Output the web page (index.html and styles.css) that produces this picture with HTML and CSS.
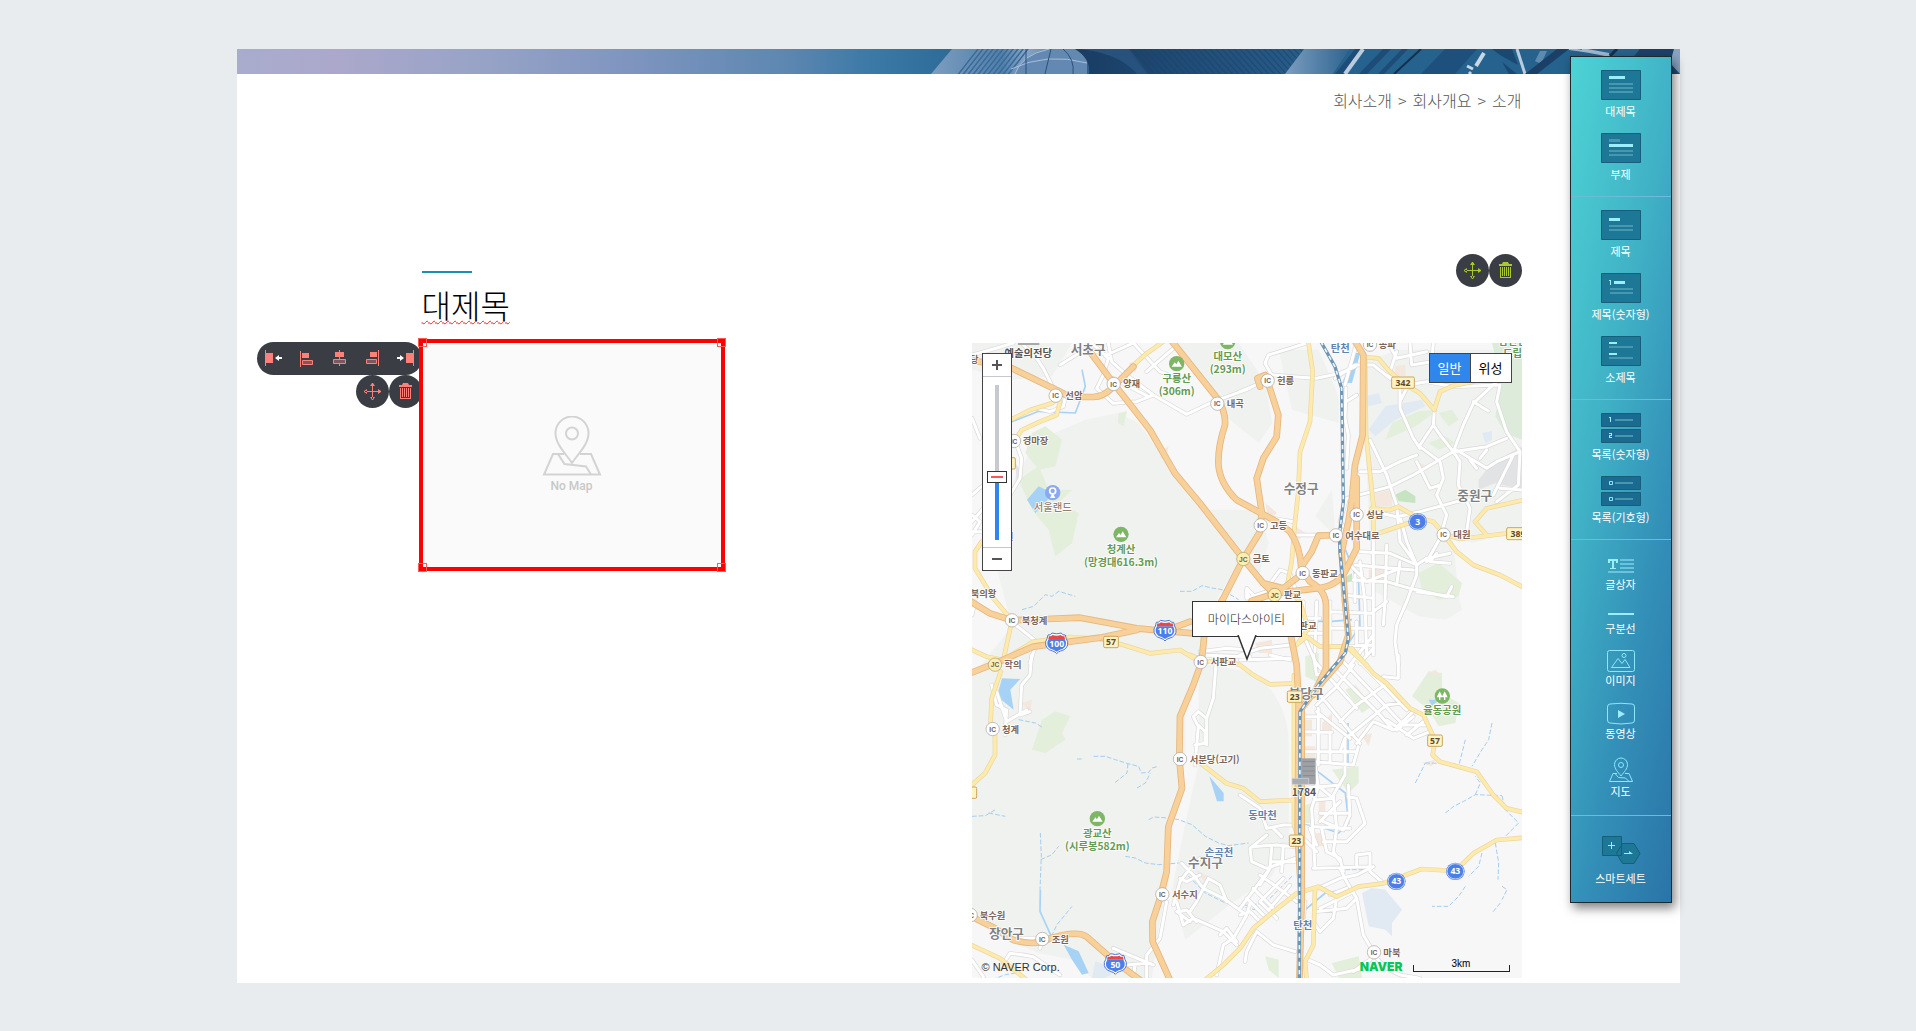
FILE: index.html
```html
<!DOCTYPE html>
<html lang="ko">
<head>
    <meta charset="UTF-8">
    <meta name="viewport" content="width=device-width, initial-scale=1.0">
    <title>회사소개 - 소개</title>
    <link rel="stylesheet" href="styles.css">
</head>
<body>
<div class="page">
    <!-- 상단 배너 -->
    <svg class="banner" viewBox="0 0 1443 25" preserveAspectRatio="none" aria-hidden="true">
        <defs>
            <linearGradient id="sky" x1="0" x2="1">
                <stop offset="0" stop-color="#a9accd"/>
                <stop offset=".07" stop-color="#aba8cb"/>
                <stop offset=".17" stop-color="#97a3c6"/>
                <stop offset=".27" stop-color="#7f95c0"/>
                <stop offset=".38" stop-color="#5d87b1"/>
                <stop offset=".44" stop-color="#3b79a6"/>
                <stop offset=".49" stop-color="#2e6c9a"/>
                <stop offset=".62" stop-color="#245a88"/>
                <stop offset="1" stop-color="#1f4d79"/>
            </linearGradient>
            <linearGradient id="tower" x1="0" x2="1">
                <stop offset="0" stop-color="#7d9dc0"/>
                <stop offset=".45" stop-color="#4f7fab"/>
                <stop offset=".6" stop-color="#87a5c6"/>
                <stop offset="1" stop-color="#2d608e"/>
            </linearGradient>
            <linearGradient id="facade" x1="0" x2="1">
                <stop offset="0" stop-color="#7c9dbf"/>
                <stop offset="1" stop-color="#2d6491"/>
            </linearGradient>
            <linearGradient id="shade" x1="0" x2="1">
                <stop offset="0" stop-color="#193c63"/>
                <stop offset="1" stop-color="#265d8a"/>
            </linearGradient>
            <pattern id="slats" width="5" height="25" patternUnits="userSpaceOnUse" patternTransform="skewX(-38)">
                <path d="M1 0V25" stroke="#3a6b99" stroke-width="2"/>
            </pattern>
            <pattern id="lines" width="6" height="25" patternUnits="userSpaceOnUse" patternTransform="skewX(42)">
                <path d="M1 0V25" stroke="#1b4069" stroke-width="1"/>
            </pattern>
        </defs>
        <path fill="url(#sky)" d="M0 0H1443V25H0z"/>
        <path fill="url(#tower)" d="M715 0H852V25H694z"/>
        <path fill="url(#slats)" d="M740 0H792L774 25H720z"/>
        <path d="M778 25Q784 6 812 0H850V25z" fill="#6389b3"/>
        <path d="M778 25Q784 6 812 0M774 20Q810 3 850 14" fill="none" stroke="#a9bfd8"/>
        <path d="M789 0V25M814 0L808 25M826 0Q838 10 836 25" fill="none" stroke="#2a4f7b"/>
        <path d="M838 0H1067L1048 25H852Q854 10 838 0z" fill="url(#shade)"/>
        <path d="M838 0Q880 2 900 25H912L892 0z" fill="#28527e"/>
        <path d="M890 0H1067L1048 25H910z" fill="url(#lines)"/>
        <path d="M1067 0H1113L1096 25H1048z" fill="url(#facade)"/>
        <path d="M1113 0H1403L1380 25H1096z" fill="#25628d"/>
        <path d="M1118 0h6l-18 25h-8zM1146 0h8l-24 25h-8zM1165 0h6l-24 25h-6z" fill="#1c4c77"/>
        <path d="M1126 0L1108 25" stroke="#b9cce0" stroke-width="4"/>
        <path d="M1184 0L1157 25" stroke="#12304f" stroke-width="2"/>
        <path d="M1208 0h32l-22 25h-34z" fill="#1d507d"/>
        <path d="M1247 4L1239 17" stroke="#c8d7e6" stroke-width="4"/>
        <path d="M1230 17L1236 20M1234 23L1232 25" stroke="#c8d7e6" stroke-width="3"/>
        <path d="M1265 13L1280 25H1272zM1255 0h20l6 16-18-10z" fill="#194872"/>
        <path d="M1280 0L1288 25" stroke="#b9cce0" stroke-width="3"/>
        <path d="M1303 2h7l-6 13-6-3z" fill="#5c8bb0"/>
        <path d="M1320 0h12l-32 25h-12zM1403 0h34l-8 25h-44z" fill="#1b4068"/>
        <path d="M1332 0Q1350 2 1373 7M1345 0L1372 5" stroke="#9fb8d0" stroke-width="2" fill="none"/>
        <path d="M1380 0L1373 7" stroke="#12304f" stroke-width="3"/>
        <path d="M1437 0H1443V25L1433 14z" fill="#8aa4c0"/>
    </svg>

    <div class="content">
    <nav class="breadcrumb" aria-label="현재 위치">
        <a href="#">회사소개</a><span>&gt;</span><a href="#">회사개요</a><span>&gt;</span><a href="#">소개</a>
    </nav>

    <section class="section">
        <header class="section-head">
            <h1>대제목</h1>
            <div class="section-tools">
                <button type="button" class="round-btn" aria-label="이동"><svg class="icon" viewBox="0 0 17 17"><use href="#icon-move"/></svg></button>
                <button type="button" class="round-btn" aria-label="삭제"><svg class="icon" viewBox="0 0 17 17"><use href="#icon-trash"/></svg></button>
            </div>
        </header>

        <div class="columns">
            <!-- 선택된 지도 블록 -->
            <div class="empty-map">
                <div class="block-tools">
                    <div class="align-bar">
                        <button type="button" aria-label="왼쪽으로 붙이기"><svg class="icon" viewBox="0 0 17 17"><path d="M0 0h1v16H0zM1 3h7v10H1z"/><path class="arrow" d="M10 8l4-3v2h3v2h-3v2z"/></svg></button>
                        <button type="button" aria-label="왼쪽 정렬"><svg class="icon" viewBox="0 0 17 17"><path d="M2 1h1v16H2zM4 3h7v5H4z"/><path class="hollow" d="M4.500 10.500h10v4h-10z"/></svg></button>
                        <button type="button" aria-label="가운데 정렬"><svg class="icon" viewBox="0 0 17 17"><path d="M8 0h1v16H8zM4 2h9v5H4z"/><path class="hollow" d="M2.500 9.500h12v4h-12z"/></svg></button>
                        <button type="button" aria-label="오른쪽 정렬"><svg class="icon" viewBox="0 0 17 17"><path d="M14 0h1v16h-1zM6 2h7v5H6z"/><path class="hollow" d="M2.500 9.500h10v4h-10z"/></svg></button>
                        <button type="button" aria-label="오른쪽으로 붙이기"><svg class="icon" viewBox="0 0 17 17"><path d="M16 0h1v16h-1zM9 3h7v10H9z"/><path class="arrow" d="M7 8L3 5v2H0v2h3v2z"/></svg></button>
                    </div>
                    <div class="round-row">
                        <button type="button" class="round-btn" aria-label="이동"><svg class="icon" viewBox="0 0 17 17"><use href="#icon-move"/></svg></button>
                        <button type="button" class="round-btn" aria-label="삭제"><svg class="icon" viewBox="0 0 17 17"><use href="#icon-trash"/></svg></button>
                    </div>
                </div>
                <div class="empty-frame">
                    <svg class="no-map-icon" viewBox="0 0 60 60" fill="none" aria-hidden="true">
                        <path d="M30 47C25 39 13.500 29 13.500 17a16.500 16.500 0 0 1 33 0C46.500 29 35 39 30 47z"/>
                        <circle cx="30" cy="17.500" r="6"/>
                        <path d="M22 38H11L2 58.500H58L49 38H38M16 38l6.500 10L44 50.500l5 8"/>
                    </svg>
                    <span>No Map</span>
                </div>
                <i class="handle top left"></i><i class="handle top right"></i>
                <i class="handle bottom left"></i><i class="handle bottom right"></i>
            </div>

            <div class="map">
                <svg class="map-canvas" viewBox="0 0 1650 1905" role="img" aria-label="분당 주변 지도">
                    <defs>
                        <g id="ic"><circle r="20" fill="#fff" stroke="#a8a09a" stroke-width="2"/><text class="ic-text" y="8">IC</text></g>
                        <g id="jc"><circle r="20" fill="#fbeeb0" stroke="#b09a65" stroke-width="2"/><text class="ic-text" y="8">JC</text></g>
                        <g id="peak"><circle r="23" fill="#7db665"/><path d="M-15 9L-6 -4L-1 2L5 -9L16 9z" fill="#fff"/></g>
                        <g id="shield">
                            <path d="M-26 -24Q-18 -22 -14 -30Q0 -25 14 -30Q18 -22 26 -24Q28 -12 33 -4Q36 18 12 24Q4 26 0 32Q-4 26 -12 24Q-36 18 -33 -4Q-28 -12 -26 -24z" fill="#fff" stroke="#5277cf" stroke-width="3"/>
                            <path d="M-24 -12H24L28 -3Q30 16 10 20L0 26L-10 20Q-30 16 -28 -3z" fill="#4c7fe8"/>
                            <path d="M-23 -21Q-16 -19 -13 -24Q0 -20 13 -24Q16 -19 23 -21L25 -12H-25z" fill="#e34a4a"/>
                        </g>
                        <g id="disc"><ellipse rx="28" ry="26" fill="#4d7ee8"/><ellipse rx="25" ry="23" fill="none" stroke="#fff" stroke-width="2"/></g>

                        <g id="minor">
                            <g transform="translate(-36 -24)">
                                <path d="M36 60L90 45L160 24M185 24L230 70L250 100L290 180M300 90L380 40L440 60L520 24L600 110L640 125M395 24L445 70L430 120L410 160L460 205L530 200L580 180M445 24L455 80L500 120L580 180L680 238L760 200L870 160M640 40L560 110M460 130L560 182M36 250L60 310M230 220L270 230L310 215L315 190M170 330L185 370L180 430L150 480M36 480L70 450M36 560L70 520M36 590L68 590M36 600L60 560L36 540M150 860L180 880L230 920L210 985M36 840L45 800M720 950L800 940L870 945M720 960L870 965M870 790L860 770"/>
                            </g>
                            <g transform="translate(804 -24)">
                                <path d="M95 120L75 85L85 60L150 40L200 24M100 120L160 125L230 130L300 115L345 95M0 170L60 145L90 135M285 130L345 90L400 90L450 130M315 150L350 24M318 160L315 250L325 300L320 400M318 200L350 180M445 24L470 70L560 50M450 110L470 50M510 24L515 90L575 80M575 80L580 24M480 150L480 220L520 310L540 340M440 120L500 160L480 200M583 225L580 270L540 330M640 350L600 300L580 270M500 150L560 140L640 155L780 150M780 150L770 200L800 290L840 350M700 200L745 228M770 140L700 205L670 270L640 350L740 335L800 310M640 350L520 420L450 455L320 490M540 335L600 380L610 430L590 480L620 540L600 610L560 680M360 410L420 410L480 380L530 360M390 315L440 420L470 510L480 620L530 690M640 350L660 380L655 450L690 520L680 590M530 380L570 460L600 450M650 345L740 400L770 380L840 350M690 375L710 400M720 370L740 345M840 350L835 450L770 500M780 460L846 465M820 360L800 400L760 480M400 530L470 545L540 530L650 500L720 490M480 545L500 620L530 690L560 670L630 655M590 655L570 680L630 685M330 600L300 560L320 490M160 560L100 550M170 600L280 600M40 780L20 760L20 790L80 770M95 740L120 705L150 715L165 760"/>
                                <path d="M360 650L450 655L530 690L530 720L500 800L470 870L465 920L475 990M345 690L520 705M340 735L440 740L510 760L620 785L635 755M400 600L400 960M440 630L435 800L430 870M330 690L380 740L480 700M310 780L400 790M480 680L470 750M360 680L375 800L380 960M190 800L190 900L230 990M230 800L225 950M190 850L240 850M190 895L250 895M270 800L270 930M270 880L400 880M270 830L400 835M400 830L440 800M280 935L400 930M330 990L400 900M360 985L400 940M350 930L350 860M530 770L640 785M345 720L345 800M0 960L60 940L150 930M0 975L150 970"/>
                            </g>
                            <g transform="translate(-36 936)">
                                <path d="M215 0L210 60L185 90L180 180L210 170M95 90L110 150L140 165L135 240M110 110L140 200L200 165M770 0L760 130L740 190L740 270M740 190L715 170L700 185L715 215L705 330M705 270L735 265L735 230L715 210M665 625L700 660L730 700L790 730L860 780M640 750L660 680L690 640L720 610M660 670L680 680L720 660M690 770L710 740L745 670L780 690L800 740M650 740L670 810L700 790L790 830L830 870M655 770L680 765L710 800M690 800L650 770M860 780L820 850L790 870L770 960M860 780L870 745M780 840L800 820L830 860M620 740L600 850L560 900L560 970M440 900L500 930L560 925M460 880L580 930M520 970L525 930M190 900L220 905L300 960M240 880L245 850L180 850M130 925L150 895L190 900M36 915L70 965"/>
                            </g>
                            <g transform="translate(804 936)">
                                <path d="M220 0L230 60L290 40M90 0L150 15M225 20L350 160M280 40L420 180L460 225M310 20L490 210L560 210M350 10L500 165M230 150L290 95L340 30M240 120L360 265M230 170L330 250M300 200L350 150L420 100L440 85M330 240L440 150L480 145M350 265L400 200L460 225L520 170M440 195L520 250L570 230M470 225L520 185M500 240L550 200M475 0L475 70L430 65M190 185L240 185M190 230L275 232M195 290L350 290M225 320L340 330L355 275M235 160L235 330M270 230L270 320M300 290L315 250L315 360L280 420L290 520M190 400L300 390M225 330L235 395L215 460L225 640M220 380L280 430L225 435M240 475L330 475M225 515L330 520M240 500L300 440M325 390L330 480L310 525L250 500M325 425L350 430L375 505L320 560L250 560M230 570L210 520M190 550L230 590M245 520L260 590L300 610L310 650M220 640L400 635M290 520L280 590L300 620M350 635L350 600L390 595L390 650L425 680M0 420L60 460L80 520L130 510L165 510M80 540L30 580L35 620L80 640L165 610M35 575L110 570L165 575M95 580L90 640L60 690M130 570L125 650M95 620L165 620M125 545L100 520M60 660L130 710L170 740M40 700L100 760M20 730L70 780M0 760L60 680L90 640M60 740L130 670M90 760L150 690M110 790L60 740M0 780L30 770L60 800M50 830L100 870L165 890M50 830L20 890L15 920M235 700L300 670L350 660L400 635M300 640L320 680L350 730L370 840L400 890M225 770L320 760L350 730M290 730L280 790L240 830L220 800M270 720L320 700M195 740L190 800L220 800M205 915L240 930L280 960L370 940L400 900L440 940L480 960L540 970M380 920L340 950M240 760L340 710"/>
                            </g>
                        </g>

                        <g id="local">
                            <g transform="translate(-36 -24)">
                                <path d="M150 255L210 225L275 205L300 185M165 315L185 285L240 260L290 240L300 200M515 95L560 55L610 20M65 620L45 650L45 700L100 790L156 856L130 975M30 942L80 965L130 975L220 920L330 906L420 912L490 930L570 955L660 945L722 982"/>
                            </g>
                            <g transform="translate(804 -24)">
                                <path d="M205 20L218 110L210 260L180 350L175 470L165 560L155 680L140 760L180 800L205 880L170 930M175 925L200 905L240 935L320 935L380 990M375 66L415 70L445 105L490 145L540 175L583 225L600 170L640 152L700 140M375 66L378 300L400 510L400 600M395 520L450 525L475 515L533 548L580 560L612 598L660 612L760 600L850 590M400 600L533 555M612 600L650 650L700 690L780 720L850 757M740 600L705 560L740 520L850 495"/>
                            </g>
                            <g transform="translate(-36 936)">
                                <path d="M122 50L95 130L92 200L105 240L105 300L75 355L30 395M690 0L740 20L800 18L840 30L880 60L930 88L1005 85M722 325L800 385L850 400L900 440L1005 435M30 868L120 910L200 975M735 975L790 930L840 880L880 820L940 770L1010 715L1075 695L1130 725L1195 695L1270 685L1385 642L1485 648L1540 595L1610 555L1695 548M1065 700L1060 870L1035 920L1040 975"/>
                            </g>
                            <g transform="translate(804 936)">
                                <path d="M335 -20L400 55L440 85L510 160L550 180L585 255L578 300L600 320L710 350L760 420L800 460L850 472M162 60V510L175 550"/>
                            </g>
                        </g>

                        <g id="highway">
                            <g transform="translate(-36 -24)">
                                <path d="M30 74L156 100L290 165L330 186H400Q430 185 455 160L520 95M390 50L462 147L500 195L570 285L645 415L720 505L850 672L910 745L945 780M632 14L772 190Q798 230 795 270Q775 330 775 380Q775 440 830 495L880 522L950 560L990 590Q1020 630 1024 700L1050 740Q1096 765 1098 810V1000L1060 1080M850 672L790 790L735 880L725 980L700 1050L660 1145L658 1272L666 1360L625 1475L620 1610L600 1690L577 1760L578 1820L630 1935M30 798L90 835L156 856L260 852L360 848L450 865L530 880L615 888L700 895M30 1015L105 985L220 935L330 920L420 908L530 885M615 888L690 860"/>
                            </g>
                            <g transform="translate(804 -24)">
                                <path d="M60 155L52 130L75 120M88 155L115 240L110 305L70 370L50 430L65 530L60 590L10 672M340 10L370 60L368 300L345 390L335 500L325 560L305 650L315 800L325 900L300 980L235 1055L185 1120V1700M350 430V640L315 710Q290 755 230 760L105 775L35 798M288 600L235 602L215 650L188 690L188 715L130 760L70 745M150 890L170 990L176 1100L173 1500L185 1700L178 1940"/>
                            </g>
                            <g transform="translate(-36 936)">
                                <path d="M36 785L105 820L160 855Q230 875 270 850Q350 825 380 845L465 920L540 975"/>
                            </g>
                        </g>
                        <path id="rail" d="M1046 -5L1089 71L1109 136L1114 476L1102 576L1104 626L1119 776L1129 886L1120 930L1040 1025L984 1106L982 1910"/>
                    </defs>

                    <path fill="#f7f7f7" d="M0 0H1650V1905H0z"/>
                    <!-- 산지 -->
                    <g fill="#eff2ee">
                        <path d="M130 400L200 290L340 230L440 210L500 240L600 380L740 560L800 660L740 760L700 880L690 960L640 1100L640 1250L600 1440L590 1620L560 1750L540 1905H360L300 1850L200 1830L60 1770L0 1720V1000L120 850L60 620L100 500z"/>
                        <path d="M0 0H300L240 100L120 110L0 80zM600 0H800L880 120L900 240L860 300L760 220zM920 20H1040L1100 160V240L960 200zM700 500H860L890 600L860 700L760 640z"/>
                        <path d="M1170 60L1280 20H1650V560L1500 600L1440 560L1460 760L1470 800L1420 830L1340 820L1200 740zM1030 520L1080 440L1090 580z"/>
                        <path d="M680 960L850 990Q950 1080 950 1200V1500L900 1600L780 1680L640 1790L600 1640L640 1440L680 1260z"/>
                    </g>
                    <g fill="#e3eedb">
                        <path d="M180 270L220 250L270 290L250 370L200 380L160 330zM440 210L465 205L455 250L438 240zM140 410L200 370L230 440L300 440L260 480L320 510L300 600L250 640L230 560L180 500z"/>
                        <path d="M1260 240L1340 205L1400 200L1330 250L1240 290zM1370 300L1420 280L1450 300L1400 320zM1340 690L1400 660L1470 720L1460 760L1400 770L1350 740zM1400 210L1440 200L1460 230L1430 250z"/>
                        <path d="M180 1220L210 1130L250 1105L295 1120L270 1170L280 1190L220 1230zM1320 1060L1370 985L1410 990V1050L1460 1080L1450 1140L1400 1150L1370 1100zM1120 1040L1150 1025L1200 1090L1170 1110zM1080 1280L1160 1270V1320L1130 1350zM880 1840L920 1850V1905L890 1880zM1080 1860L1160 1840L1170 1905H1100zM990 1390L1020 1380V1440H990zM1000 940L1040 930V1020L1000 1000z"/>
                    </g>
                    <g fill="#dcebda"><path d="M1560 0H1650V290L1600 270L1570 220L1590 120z"/></g>
                    <path fill="#c7e4c2" d="M1270 455L1300 440L1330 460V480L1280 475zM1125 700L1140 690V715L1120 720z"/>
                    <g fill="#e2e3e5"><path d="M1560 360L1650 310V440L1570 420L1520 440V410zM130 360L150 390L135 430z"/></g>
                    <g fill="#f4e7de">
                        <path d="M1210 450L1260 440V490L1210 490zM1340 360L1370 370L1350 390zM1270 70L1300 65V100H1270zM470 60L500 55L490 90zM570 320L590 310L580 350L565 345zM880 480L915 510L890 530zM990 1130H1020V1180H990zM1050 1140L1080 1110V1170H1050zM990 1210H1030V1260H990zM1170 1180L1200 1170L1190 1210zM1350 1260L1390 1250L1380 1270zM1370 990L1390 980L1410 1000zM150 1080L180 1070L175 1110zM1040 1365H1060V1430H1040zM1190 680H1240V720H1190zM970 550L1000 570L980 590zM1030 1470H1060V1510H1030zM670 1580L710 1600L700 1620zM850 900L900 890V930H860z"/>
                    </g>
                    <!-- 물길 -->
                    <g fill="#a6d3f5">
                        <path d="M165 470L200 430L240 450L220 480L190 510zM75 1060L90 1006L145 1008L115 1040L125 1100zM712 1300L755 1350V1375H735zM275 1805L320 1825L350 1890L330 1895L300 1850zM1370 1070L1400 1070L1380 1090zM1110 120L1150 30H1165L1140 120zM1102 300L1112 420L1106 360z"/>
                    </g>
                    <g fill="#e1e9f3">
                        <path d="M1190 260L1240 190L1350 170L1360 190L1270 230L1210 280zM1180 160L1220 150L1230 180L1190 190zM1530 270L1560 265V290L1540 300zM1170 1650L1200 1635L1240 1640L1290 1700L1260 1740V1780L1240 1760L1190 1750zM370 1855L440 1880L400 1905H360z"/>
                    </g>
                    <g fill="none" stroke="#a9d2f4" stroke-width="5">
                        <path d="M330 80L340 130L310 210L200 205L110 240M1128 1140V1260M1030 1280L1120 1350L1130 1440L1100 1470L1040 1450M1120 620L1160 720L1164 850L1130 900M1000 835L1080 835L1140 830M1000 1700L1060 1650M205 1640L204 1705L238 1780"/>
                    </g>
                    <g fill="none" stroke="#a3cef2" stroke-width="3" stroke-dasharray="14 6">
                        <path d="M150 800L185 790L220 755L240 760L260 745L310 760M624 745L660 745L690 728L720 735L750 740L800 770M960 1440L1040 1450M205 1470L208 1540L204 1640M238 1780L255 1745L300 1690M206 1550L240 1535L260 1510M315 1248H335M365 1240H400L430 1250L468 1262L500 1270L508 1290L530 1288L540 1275L560 1270M468 1262L465 1290L425 1322M495 1335L520 1320L535 1290M530 1430L545 1422L590 1425L620 1430L660 1445L700 1480L740 1500L770 1508L830 1500M460 1540L490 1545L520 1560L560 1565L620 1560M0 1420L40 1418L70 1400M50 1410L100 1420M140 1130L190 1140L215 1155M1560 1140L1550 1190L1530 1220L1500 1270M1480 1190L1470 1230L1460 1270M1330 1320L1345 1290L1360 1260M1360 1260L1450 1262M1420 1410L1445 1390L1475 1375L1510 1355L1590 1358M1590 1358L1600 1400L1640 1440L1600 1480M1510 1355L1525 1320L1510 1300M1530 1530L1520 1570L1490 1600M1480 1630L1460 1660L1430 1690H1380M1570 1500L1580 1560L1578 1610M1590 1630L1605 1640L1590 1670M1585 1680L1560 1710M60 1910L100 1895L130 1890M650 1600L700 1650L760 1680L850 1700M800 1690L880 1680L960 1600M1060 1650L1110 1640M1100 1580H1180"/>
                    </g>

                    <use href="#minor" stroke="#d9d9d9" stroke-width="13" class="road"/>
                    <use href="#minor" stroke="#fff" stroke-width="9" class="road"/>
                    <use href="#local" stroke="#ead6a0" stroke-width="14" class="road"/>
                    <use href="#local" stroke="#feeaac" stroke-width="10" class="road"/>
                    <use href="#highway" stroke="#e6b67e" stroke-width="20" class="road"/>
                    <use href="#highway" stroke="#f8d09a" stroke-width="15" class="road"/>
                    <use href="#rail" stroke="#6d95b4" stroke-width="10" class="road"/>
                    <use href="#rail" stroke="#f1f5f8" stroke-width="5" stroke-dasharray="13 12" class="road dash"/>
                    <path d="M988 1246h43v78h-43z" fill="#9ea2a6"/><path d="M960 1306h50v18h-50z" fill="#a9adb1" stroke="#d4d6d8" stroke-width="2"/>
                    <path d="M992 1256h36M992 1270h36M992 1284h36M992 1298h36" stroke="#888c90" stroke-width="3"/>

                    <!-- 나들목 -->
                    <use href="#ic" x="251" y="158"/><use href="#ic" x="425" y="123"/><use href="#ic" x="736" y="182"/>
                    <use href="#ic" x="126" y="294"/><use href="#ic" x="120" y="832"/><use href="#jc" x="69" y="965"/>
                    <use href="#jc" x="814" y="648"/><use href="#ic" x="887" y="113"/><use href="#ic" x="1194" y="5"/>
                    <use href="#ic" x="866" y="547"/><use href="#ic" x="1154" y="515"/><use href="#ic" x="1092" y="577"/>
                    <use href="#ic" x="992" y="690"/><use href="#jc" x="908" y="756"/><use href="#ic" x="1415" y="575"/>
                    <use href="#ic" x="686" y="957"/><use href="#ic" x="62" y="1158"/><use href="#ic" x="624" y="1248"/>
                    <use href="#ic" x="571" y="1654"/><use href="#ic" x="-4" y="1716"/><use href="#ic" x="211" y="1788"/>
                    <use href="#ic" x="1206" y="1828"/>
                    <g class="place">
                        <text x="280" y="168">선암</text><text x="453" y="133">양재</text><text x="764" y="192">내곡</text>
                        <text x="152" y="304">경마장</text><text x="149" y="842">북청계</text><text x="97" y="975">학의</text>
                        <text x="842" y="658">금토</text><text x="915" y="124">헌릉</text><text x="1220" y="14">송파</text>
                        <text x="894" y="557">고등</text><text x="1183" y="525">성남</text><text x="1120" y="588">여수대로</text>
                        <text x="1020" y="701">동판교</text><text x="936" y="766">판교</text><text x="1444" y="586">대원</text>
                        <text x="982" y="857">판교</text><text x="716" y="967">서판교</text><text x="90" y="1169">청계</text>
                        <text x="653" y="1259">서분당(고기)</text><text x="600" y="1665">서수지</text><text x="23" y="1727">북수원</text>
                        <text x="239" y="1799">조원</text><text x="1234" y="1839">마북</text><text x="-4" y="762">북의왕</text>
                        <text x="-6" y="61">당</text><text x="98" y="592">원</text>
                    </g>
                    <g class="district">
                        <text x="296" y="33">서초구</text><text x="935" y="449">수정구</text><text x="1456" y="470">중원구</text>
                        <text x="950" y="1064">분당구</text><text x="648" y="1572">수지구</text><text x="51" y="1785">장안구</text>
                    </g>
                    <g class="mountain">
                        <use href="#peak" x="614" y="62"/><text x="614" y="118">구룡산</text><text x="614" y="156">(306m)</text>
                        <use href="#peak" x="767" y="-4"/><text x="767" y="52">대모산</text><text x="767" y="91">(293m)</text>
                        <use href="#peak" x="447" y="574"/><text x="447" y="629">청계산</text><text x="447" y="669">(망경대616.3m)</text>
                        <use href="#peak" x="376" y="1427"/><text x="376" y="1482">광교산</text><text x="376" y="1521">(시루봉582m)</text>
                        <circle cx="1411" cy="1059" r="23" fill="#7db665"/><path d="M1403 1045l9 18h-7v8h-4v-8h-7zM1418 1045l9 18h-7v8h-4v-8h-7z" fill="#fff"/>
                        <text x="1411" y="1114">율동공원</text>
                        <text x="1622" y="6">남한산</text><text x="1636" y="42">도립공</text>
                    </g>
                    <g class="stream">
                        <text x="1076" y="26">탄천</text><text x="829" y="1429">동막천</text><text x="698" y="1540">손곡천</text><text x="964" y="1758">탄천</text>
                    </g>
                    <text class="landmark" x="169" y="41">예술의전당</text>
                    <path d="M138 0h64v6h-64z" fill="#a7aaad"/>
                    <text class="landmark" x="996" y="1358">1784</text>
                    <circle cx="242" cy="449" r="23" fill="#8aa9ee"/><circle cx="242" cy="444" r="9" fill="none" stroke="#fff" stroke-width="5"/><path d="M234 465l8-16 8 16z" fill="#fff"/>
                    <text class="leisure" x="242" y="504">서울랜드</text>

                    <!-- 도로 번호 -->
                    <g class="shield-text">
                        <use href="#shield" x="579" y="862"/><text x="579" y="874">110</text>
                        <use href="#shield" x="254" y="900"/><text x="254" y="913">100</text>
                        <use href="#shield" x="430" y="1862"/><text x="430" y="1875">50</text>
                        <use href="#disc" x="1337" y="536"/><text x="1337" y="546">3</text>
                        <use href="#disc" x="1273" y="1615"/><text x="1273" y="1624">43</text>
                        <use href="#disc" x="1450" y="1585"/><text x="1450" y="1594">43</text>
                    </g>
                    <g class="route">
                        <rect x="395" y="880" width="44" height="34" rx="4"/><text x="417" y="906">57</text>
                        <rect x="1259" y="102" width="68" height="34" rx="4"/><text x="1293" y="129">342</text>
                        <rect x="1604" y="554" width="68" height="36" rx="4"/><text x="1638" y="582">389</text>
                        <rect x="946" y="1044" width="44" height="34" rx="4"/><text x="968" y="1070">23</text>
                        <rect x="952" y="1476" width="42" height="34" rx="4"/><text x="973" y="1502">23</text>
                        <rect x="1367" y="1176" width="44" height="34" rx="4"/><text x="1389" y="1202">57</text>
                        <rect x="-28" y="1332" width="42" height="34" rx="4"/>
                        <rect x="88" y="344" width="42" height="34" rx="4"/>
                    </g>
                </svg>

                <div class="zoom-control">
                    <button type="button" aria-label="확대"><svg viewBox="0 0 10 10"><path d="M4 0h2v4h4v2H6v4H4V6H0V4h4z"/></svg></button>
                    <input type="range" min="0" max="15" value="6" aria-label="확대 단계">
                    <button type="button" aria-label="축소"><svg viewBox="0 0 10 10"><path d="M0 4h10v2H0z"/></svg></button>
                </div>
                <div class="map-type">
                    <button type="button" class="active">일반</button><button type="button">위성</button>
                </div>
                <div class="info-window">
                    마이다스아이티
                    <svg viewBox="0 0 20 26" aria-hidden="true"><path d="M1 0L10 24L19 0" fill="#fff" stroke="#333" stroke-width="1.500"/></svg>
                </div>
                <div class="map-footer">
                    <small>© NAVER Corp.</small>
                    <a href="#" class="naver">NAVER</a>
                    <span class="scale">3km</span>
                </div>
            </div>
        </div>
    </section>
    </div>

    <!-- 블록 추가 팔레트 -->
    <aside class="palette" aria-label="블록 추가">
        <div class="group">
            <button type="button"><svg width="40" height="30" viewBox="0 0 40 30"><path class="box" d="M.500.500h39v29H.500z"/><path class="hi" d="M8 6h16v3H8z"/><path class="lo" d="M8 13h24v2H8zM8 17h24v2H8zM8 21h24v2H8z"/></svg>대제목</button>
            <button type="button"><svg width="40" height="30" viewBox="0 0 40 30"><path class="box" d="M.500.500h39v29H.500z"/><path class="hi" d="M8 11h24v3H8z"/><path class="lo" d="M8 6h11v3H8zM8 17h24v2H8zM8 21h24v2H8z"/></svg>부제</button>
        </div>
        <div class="group">
            <button type="button"><svg width="40" height="30" viewBox="0 0 40 30"><path class="box" d="M.500.500h39v29H.500z"/><path class="hi" d="M8 8h11v3H8z"/><path class="lo" d="M8 15h24v2H8zM8 19h24v2H8z"/></svg>제목</button>
            <button type="button"><svg width="40" height="30" viewBox="0 0 40 30"><path class="box" d="M.500.500h39v29H.500z"/><path class="hi" d="M13 8h11v3H13zM8 7h2v5H9V8H8z"/><path class="lo" d="M9 15h23v2H9zM9 19h23v2H9z"/></svg>제목(숫자형)</button>
            <button type="button"><svg width="40" height="30" viewBox="0 0 40 30"><path class="box" d="M.500.500h39v29H.500z"/><path class="hi" d="M8 6h8v2H8zM8 17h8v2H8z"/><path class="lo" d="M8 10h24v2H8zM8 21h24v2H8z"/></svg>소제목</button>
        </div>
        <div class="group list">
            <button type="button"><svg width="40" height="30" viewBox="0 0 40 30"><path class="box" d="M.500.500h39v13H.500zM.500 16.500h39v13H.500z"/><path class="hi" d="M8 4h2v5H9V5H8zM8 20h3v3H9v1h2v1H8v-3h2v-1H8z"/><path class="lo" d="M14 6h18v2H14zM14 22h18v2H14z"/></svg>목록(숫자형)</button>
            <button type="button"><svg width="40" height="30" viewBox="0 0 40 30"><path class="box" d="M.500.500h39v13H.500zM.500 16.500h39v13H.500z"/><path class="line" d="M8.500 5.500h3v3h-3zM8.500 21.500h3v3h-3z"/><path class="lo" d="M14 6h18v2H14zM14 22h18v2H14z"/></svg>목록(기호형)</button>
        </div>
        <div class="group objects">
            <button type="button"><svg width="28" height="17" viewBox="0 0 28 17"><path class="hi" d="M1 0h10v4H9V2H7v7h2v1H3V9h2V2H3v2H1z"/><path class="soft" d="M13 0h14v2H13zM13 4h14v2H13zM13 8h14v2H13zM1 12h26v2H1z"/></svg>글상자</button>
            <button type="button"><svg width="28" height="14" viewBox="0 0 28 14"><path class="hi" d="M1 7h26v2H1z"/></svg>구분선</button>
            <button type="button"><svg width="28" height="22" viewBox="0 0 28 22"><rect class="line" x=".500" y=".500" width="27" height="21" rx="2"/><path class="line" d="M4.500 17.500L11 8.500l4 5 3-4 5 8z"/><circle class="line" cx="17" cy="5.500" r="2"/></svg>이미지</button>
            <button type="button"><svg width="28" height="23" viewBox="0 0 28 23"><path class="line" d="M3 2Q14 .500 25 2q2.500 0 2.500 3v13q0 3-2.500 3Q14 23 3 21 .500 21 .500 18V5Q.500 2 3 2z"/><path class="hi" d="M11 8l7 4-7 4z"/></svg>동영상</button>
            <button type="button"><svg width="28" height="28" viewBox="0 0 28 28"><path class="line" d="M14 21C11 17 7.500 14 7.500 9.500a6.500 6.500 0 0 1 13 0C20.500 14 17 17 14 21zM10 18.500H6L2.500 26.500h23L22 18.500h-4M8.500 19l3 3.500 7 .500 3 3"/><circle class="line" cx="14" cy="10" r="2.500"/></svg>지도</button>
        </div>
        <div class="group sets">
            <button type="button"><svg width="38" height="34" viewBox="0 0 38 34"><path class="box" d="M.500.500h19v19H.500zM20.500 7.500H32l6 10-6 10H20.500l-6-10z"/><path class="hi" d="M9 6h1v3h3v1h-3v3H9v-3H6V9h3zM22 17h5v-2l4 3H22z"/></svg>스마트세트</button>
        </div>
    </aside>
</div>

<svg width="0" height="0" class="sprite" aria-hidden="true">
    <symbol id="icon-move" viewBox="0 0 17 17"><path d="M8 1h1v15H8zM1 8h15v1H1zM8 0h1l2 3H6zM8 17h1l2-3H6zM0 8v1l3 2V6zM17 8v1l-3 2V6z"/></symbol>
    <symbol id="icon-trash" viewBox="0 0 17 17"><path d="M2 2h3l1-2h5l1 2h3v2H2zM3 5h1v10h9V5h1v11H3zM5 5h1v9H5zM7 5h1v9H7zM9 5h1v9H9zM11 5h1v9h-1z"/></symbol>
</svg>
</body>
</html>
```

FILE: styles.css
```css
* {
    box-sizing: border-box;
}
body {
    margin: 0;
    padding: 49px 20px 48px;
    background-color: #e8ecef;
    font-family: "Noto Sans CJK KR", "Noto Sans", sans-serif;
    color: #000;
}
button {
    margin: 0;
    padding: 0;
    border: 0;
    background: none;
    font-family: inherit;
    color: inherit;
    cursor: pointer;
}
svg {
    display: block;
}
.sprite {
    position: absolute;
}
.page {
    position: relative;
    max-width: 1443px;
    margin: 0 auto;
    padding-bottom: 5px;
    background-color: #fff;
}
.banner {
    width: 100%;
    height: 25px;
}
/* 오른쪽은 팔레트 자리를 비워 둔다 */
.content {
    margin: 0 158px 0 185px;
}
.breadcrumb {
    display: flex;
    justify-content: flex-end;
    gap: 6px;
    padding-top: 14px;
    font-size: 16px;
    font-weight: 300;
    line-height: 24px;
    color: #555;
}
.breadcrumb a {
    color: inherit;
    text-decoration: none;
}
.section {
    margin-top: 142px;
}
.section-head {
    display: flex;
    justify-content: space-between;
    align-items: flex-start;
    height: 88px;
}
.section-head h1 {
    margin: 17px 0 0;
    font-size: 32px;
    font-weight: 300;
    line-height: 46px;
    text-decoration: underline wavy #ff2020 1px;
    text-underline-offset: 2px;
    text-decoration-skip-ink: none;
}
.section-head h1::before {
    content: "";
    display: block;
    width: 50px;
    height: 2px;
    margin-bottom: 8px;
    background-color: #1b8fb0;
}
.section-tools,
.round-row {
    display: flex;
    fill: #a9c92c;
}
.round-btn {
    display: flex;
    align-items: center;
    justify-content: center;
    width: 33px;
    height: 33px;
    border-radius: 50%;
    background-color: #3a3e44;
}
.icon {
    width: 17px;
    height: 17px;
}
.columns {
    display: grid;
    grid-template-columns: 1fr 1fr;
    align-items: start;
}

/* 선택된 블록 */
.empty-map {
    position: relative;
    width: 300px;
    height: 226px;
}
.empty-frame {
    position: relative;
    display: flex;
    flex-direction: column;
    align-items: center;
    justify-content: center;
    height: 100%;
    padding-top: 2px;
    background-color: #fafafa;
    outline: 4px solid #f00;
    outline-offset: -1px;
    font-family: Roboto, sans-serif;
    font-size: 12px;
    font-weight: 500;
    line-height: 20px;
    color: #c8c8c8;
}
.no-map-icon {
    width: 60px;
    height: 60px;
    stroke: #d3d3d3;
    stroke-width: 2;
}
.block-tools {
    position: absolute;
    top: 0;
    right: 100%;
    display: flex;
    flex-direction: column;
    align-items: flex-end;
}
.block-tools .icon,
.block-tools .round-row {
    fill: #ff8078;
}
.block-tools .arrow {
    fill: #fff;
}
.block-tools .hollow {
    fill: #80565a;
    stroke: #ff8078;
}
.align-bar {
    display: flex;
    border-radius: 17px;
    background-color: #3a3e44;
}
.align-bar button {
    display: flex;
    align-items: center;
    justify-content: center;
    width: 33px;
    height: 33px;
}
.handle {
    position: absolute;
    width: 9px;
    height: 9px;
    border: 1px solid #ff5a5a;
}
.handle.top { top: -4px; }
.handle.bottom { bottom: -4px; }
.handle.left { left: -4px; }
.handle.right { right: -4px; }

/* 지도 */
.map {
    position: relative;
    padding-top: 1px;
}
.map-canvas {
    width: 100%;
    height: auto;
    overflow: hidden;
}
.road {
    fill: none;
    stroke-linejoin: round;
    stroke-linecap: round;
}
.dash {
    stroke-linecap: butt;
}
.map-canvas text {
    paint-order: stroke;
    stroke: #fff;
    stroke-width: 5px;
    stroke-linejoin: round;
}
.map-canvas .ic-text {
    font: 700 20px "Liberation Sans", sans-serif;
    fill: #6e6259;
    stroke: none;
    text-anchor: middle;
}
.place {
    font-size: 28px;
    font-weight: 700;
    fill: #7a6558;
}
.district {
    font-size: 38px;
    font-weight: 700;
    fill: #808080;
}
.mountain {
    font-size: 31px;
    font-weight: 700;
    text-anchor: middle;
}
.mountain text {
    fill: #659a52;
}
.stream {
    font-size: 31px;
    font-weight: 700;
    fill: #6183ae;
}
.landmark {
    font-size: 31px;
    font-weight: 700;
    text-anchor: middle;
    fill: #555;
}
.leisure {
    font-size: 31px;
    font-weight: 500;
    text-anchor: middle;
    fill: #937f76;
}
.map-canvas .shield-text text {
    font: 700 26px "Noto Sans", sans-serif;
    text-anchor: middle;
    fill: #fff;
    stroke: none;
}
.route rect {
    fill: #fef3c3;
    stroke: #cda55f;
    stroke-width: 3px;
}
.map-canvas .route text {
    font: 700 26px "Noto Sans", sans-serif;
    text-anchor: middle;
    fill: #5f4a30;
    stroke: none;
}
.zoom-control {
    position: absolute;
    top: 11px;
    left: 10px;
    display: flex;
    flex-direction: column;
    align-items: center;
    width: 30px;
    height: 218px;
    border: 1px solid #444;
    background-color: #fff;
}
.zoom-control button {
    display: flex;
    align-items: center;
    justify-content: center;
    width: 100%;
    height: 23px;
    border-bottom: 1px solid #c5c8cc;
}
.zoom-control button:last-child {
    border-top: 1px solid #c5c8cc;
    border-bottom: 0;
}
.zoom-control svg {
    width: 10px;
    height: 10px;
    fill: #555;
}
.zoom-control input {
    flex: 1;
    width: 20px;
    min-height: 0;
    margin: 8px 0 7px;
    appearance: none;
    writing-mode: vertical-lr;
    direction: rtl;
    background: linear-gradient(to top, #2f86ec 40%, #c6cacf 40%) center / 4px 100% no-repeat;
}
.zoom-control input::-webkit-slider-thumb {
    appearance: none;
    width: 20px;
    height: 12px;
    border: 1px solid #333;
    background: linear-gradient(#f55, #f55) center / 12px 2px no-repeat #fff;
}
.map-type {
    position: absolute;
    top: 11px;
    right: 10px;
    display: flex;
    height: 30px;
    border: 1px solid #444;
    background-color: #fff;
}
.map-type button {
    width: 40px;
    padding-bottom: 2px;
    font-size: 13px;
}
.map-type button + button {
    width: 41px;
    border-left: 1px solid #444;
}
.map-type .active {
    background-color: #2f86ec;
    color: #fff;
}
.info-window {
    position: absolute;
    top: 259px;
    left: 220px;
    width: 110px;
    border: 1px solid #333;
    background-color: #fff;
    font-size: 12px;
    font-weight: 300;
    line-height: 34px;
    text-align: center;
    color: #222;
}
.info-window svg {
    position: absolute;
    top: 100%;
    left: 50%;
    width: 20px;
    height: 26px;
    margin-left: -10px;
    margin-top: -1px;
}
.map-footer {
    position: absolute;
    right: 12px;
    bottom: 3px;
    left: 10px;
    display: flex;
    align-items: flex-end;
    font-family: "Liberation Sans", sans-serif;
    line-height: 16px;
    color: #333;
}
.map-footer small {
    margin-right: auto;
    font-size: 11px;
}
.naver {
    margin-right: 10px;
    font-family: Inter, sans-serif;
    font-size: 12px;
    font-weight: 900;
    color: #03c75a;
    text-decoration: none;
}
.scale {
    position: relative;
    width: 97px;
    padding-bottom: 3px;
    font-size: 10px;
    text-align: center;
    color: #000;
}
.scale::after {
    content: "";
    position: absolute;
    right: 0;
    bottom: 3px;
    left: 0;
    height: 6px;
    border: 1px solid #222;
    border-top: 0;
}

/* 팔레트 */
.palette {
    position: absolute;
    top: 7px;
    right: 8px;
    width: 102px;
    border: 1px solid #1c2a30;
    background: linear-gradient(102deg, #4dd3d5, #40b2c6 38%, #3390b8 68%, #2a74a7);
    box-shadow: 3px 5px 10px rgba(0, 0, 0, .5);
}
.group {
    padding: 13px 0 0;
}
.group + .group {
    border-top: 1px solid #6bbcd8;
}
.group button {
    display: flex;
    flex-direction: column;
    align-items: center;
    width: 100%;
    margin-bottom: 14px;
    font-size: 11px;
    line-height: 16px;
    color: #fff;
}
.group button:last-child {
    margin-bottom: 14px;
}
.group svg {
    margin-bottom: 3px;
    overflow: visible;
}
.group.objects {
    padding: 19px 0 16px;
}
.group.objects button:last-child {
    margin-bottom: 0;
}
.objects svg,
.sets svg {
    margin-bottom: 0;
}
.group.sets {
    padding: 20px 0 2px;
}
.box {
    fill: #1c7896;
    stroke: #175f78;
}
.list .box {
    fill: #1a6a92;
}
.hi {
    fill: #9beeff;
}
.lo {
    fill: #4797ae;
}
.soft {
    fill: #6cc4dc;
}
.line {
    fill: none;
    stroke: #8ee6fa;
}
```
